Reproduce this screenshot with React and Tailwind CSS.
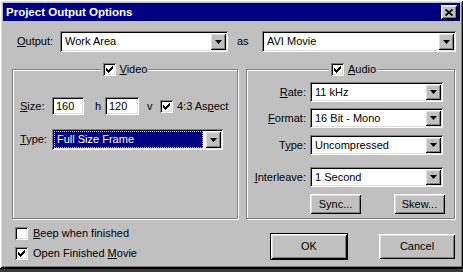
// Win95 style "Project Output Options" dialog.

const SUNKEN =
  'shadow-[inset_1px_1px_#808080,inset_-1px_-1px_#fff,inset_2px_2px_#000,inset_-2px_-2px_#dfdfdf]'
const RAISED =
  'shadow-[inset_1px_1px_#fff,inset_-1px_-1px_#000,inset_2px_2px_#dfdfdf,inset_-2px_-2px_#808080]'

const CHECK_PIXELS = [
  [6, 0, 1],
  [5, 1, 2],
  [0, 2, 1],
  [4, 2, 3],
  [0, 3, 2],
  [3, 3, 3],
  [0, 4, 5],
  [1, 5, 3],
  [2, 6, 1],
]

function Check({ checked }) {
  return (
    <span className={'flex h-[13px] w-[13px] shrink-0 items-center justify-center bg-white ' + SUNKEN}>
      {checked && (
        <svg width="7" height="7" viewBox="0 0 7 7" shapeRendering="crispEdges">
          {CHECK_PIXELS.map(([x, y, w]) => (
            <rect key={x + '-' + y} x={x} y={y} width={w} height="1" fill="#000" />
          ))}
        </svg>
      )}
    </span>
  )
}

function DropBtn() {
  return (
    <span className={'flex h-full w-[16px] shrink-0 items-center justify-center bg-[#c0c0c0] ' + RAISED}>
      <svg width="7" height="4" viewBox="0 0 7 4">
        <path d="M0 0h7L3.5 4z" fill="#000" />
      </svg>
    </span>
  )
}

function Combo({ value, className, selected }) {
  return (
    <div className={'flex bg-white p-[2px] ' + SUNKEN + ' ' + className}>
      {selected ? (
        <div className="mr-[2px] flex flex-1 items-center border border-dotted border-[#c8c8a0] bg-[#000080] pl-[2px] text-white">
          {value}
        </div>
      ) : (
        <div className="flex flex-1 items-center pl-[3px]">{value}</div>
      )}
      <DropBtn />
    </div>
  )
}

function Field({ value, className }) {
  return (
    <div className={'flex h-[18px] items-center bg-white pl-[4px] ' + SUNKEN + ' ' + className}>{value}</div>
  )
}

function Button({ children, className, isDefault }) {
  return (
    <div
      className={
        'flex items-center justify-center bg-[#c0c0c0] ' +
        RAISED +
        ' ' +
        (isDefault ? 'outline outline-1 outline-black ' : '') +
        className
      }
    >
      {children}
    </div>
  )
}

export default function App() {
  return (
    <div className="h-[272px] w-[463px] overflow-hidden bg-[#202020] font-['Liberation_Sans',Arial,sans-serif] text-[11px] leading-[13px] text-black">
      <div className={'flex h-[268px] flex-col bg-[#c0c0c0] p-[3px] ' + RAISED}>
        {/* Title bar */}
        <div className="flex h-[18px] shrink-0 items-center bg-[#000080] pl-[3px] pr-[3px]">
          <span className="flex-1 text-[11.5px] font-bold text-white">Project Output Options</span>
          <span className={'flex h-[14px] w-[16px] items-center justify-center bg-[#c0c0c0] ' + RAISED}>
            <svg width="8" height="7" viewBox="0 0 8 7">
              <path d="M0.5 0.5L7.5 6.5M7.5 0.5L0.5 6.5" stroke="#000" strokeWidth="1.8" />
            </svg>
          </span>
        </div>

        <div className="flex flex-col pl-[9px]">
          {/* Output row */}
          <div className="mt-[10px] flex items-center">
            <span className="ml-[5px] w-[43px]">
              <u>O</u>utput:
            </span>
            <Combo value="Work Area" className="h-[21px] w-[168px]" />
            <span className="ml-[9px] w-[25px]">as</span>
            <Combo value="AVI Movie" className="h-[21px] w-[194px]" />
          </div>

          {/* Groups */}
          <div className="mt-[11px] flex gap-[8px]">
            <fieldset className="h-[156px] w-[226px] border border-[#808080] px-[7px] shadow-[1px_1px_0_#fff,inset_1px_1px_0_#fff]">
              <legend className="mx-auto flex h-[13px] items-center gap-[4px] bg-[#c0c0c0] px-[2px]">
                <Check checked />
                <span>
                  <u>V</u>ideo
                </span>
              </legend>
              <div className="mt-[21px] flex items-center">
                <span className="w-[32px]">
                  <u>S</u>ize:
                </span>
                <Field value="160" className="w-[32px]" />
                <span className="ml-[11px] w-[10px]">h</span>
                <Field value="120" className="w-[34px]" />
                <span className="ml-[8px] w-[13px]">v</span>
                <Check checked />
                <span className="ml-[4px]">
                  4:3 As<u>p</u>ect
                </span>
              </div>
              <div className="mt-[14px] flex items-center">
                <span className="w-[32px]">
                  <u>T</u>ype:
                </span>
                <Combo value="Full Size Frame" className="h-[21px] w-[171px]" selected />
              </div>
            </fieldset>

            <fieldset className="h-[156px] w-[209px] border border-[#808080] pl-[6px] shadow-[1px_1px_0_#fff,inset_1px_1px_0_#fff]">
              <legend className="mx-auto flex h-[13px] items-center gap-[4px] bg-[#c0c0c0] px-[2px]">
                <Check checked />
                <span>
                  <u>A</u>udio
                </span>
              </legend>
              <div className="mt-[6px] flex items-center">
                <span className="w-[53px] text-right">
                  <u>R</u>ate:
                </span>
                <Combo value="11 kHz" className="ml-[4px] h-[20px] w-[133px]" />
              </div>
              <div className="mt-[6px] flex items-center">
                <span className="w-[53px] text-right">
                  <u>F</u>ormat:
                </span>
                <Combo value="16 Bit - Mono" className="ml-[4px] h-[20px] w-[133px]" />
              </div>
              <div className="mt-[7px] flex items-center">
                <span className="w-[53px] text-right">
                  T<u>y</u>pe:
                </span>
                <Combo value="Uncompressed" className="ml-[4px] h-[20px] w-[133px]" />
              </div>
              <div className="mt-[12px] flex items-center">
                <span className="w-[53px] text-right">
                  <u>I</u>nterleave:
                </span>
                <Combo value="1 Second" className="ml-[4px] h-[20px] w-[133px]" />
              </div>
              <div className="mt-[7px] flex gap-[33px] pl-[57px]">
                <Button className="h-[20px] w-[51px]">Sync...</Button>
                <Button className="h-[20px] w-[51px]">Skew...</Button>
              </div>
            </fieldset>
          </div>

          {/* Bottom row */}
          <div className="mt-[8px] flex">
            <div className="flex flex-1 flex-col gap-[7px] pl-[3px]">
              <div className="flex h-[13px] items-center gap-[5px]">
                <Check />
                <span>
                  <u>B</u>eep when finished
                </span>
              </div>
              <div className="flex h-[13px] items-center gap-[5px]">
                <Check checked />
                <span>
                  Open Finished <u>M</u>ovie
                </span>
              </div>
            </div>
            <div className="mr-[5px] mt-[7px] flex gap-[32px]">
              <Button className="h-[25px] w-[76px]" isDefault>
                OK
              </Button>
              <Button className="h-[25px] w-[76px]">Cancel</Button>
            </div>
          </div>
        </div>
      </div>
      <div className="h-[4px] border-t border-black bg-[#3a3a3a]" />
    </div>
  )
}
